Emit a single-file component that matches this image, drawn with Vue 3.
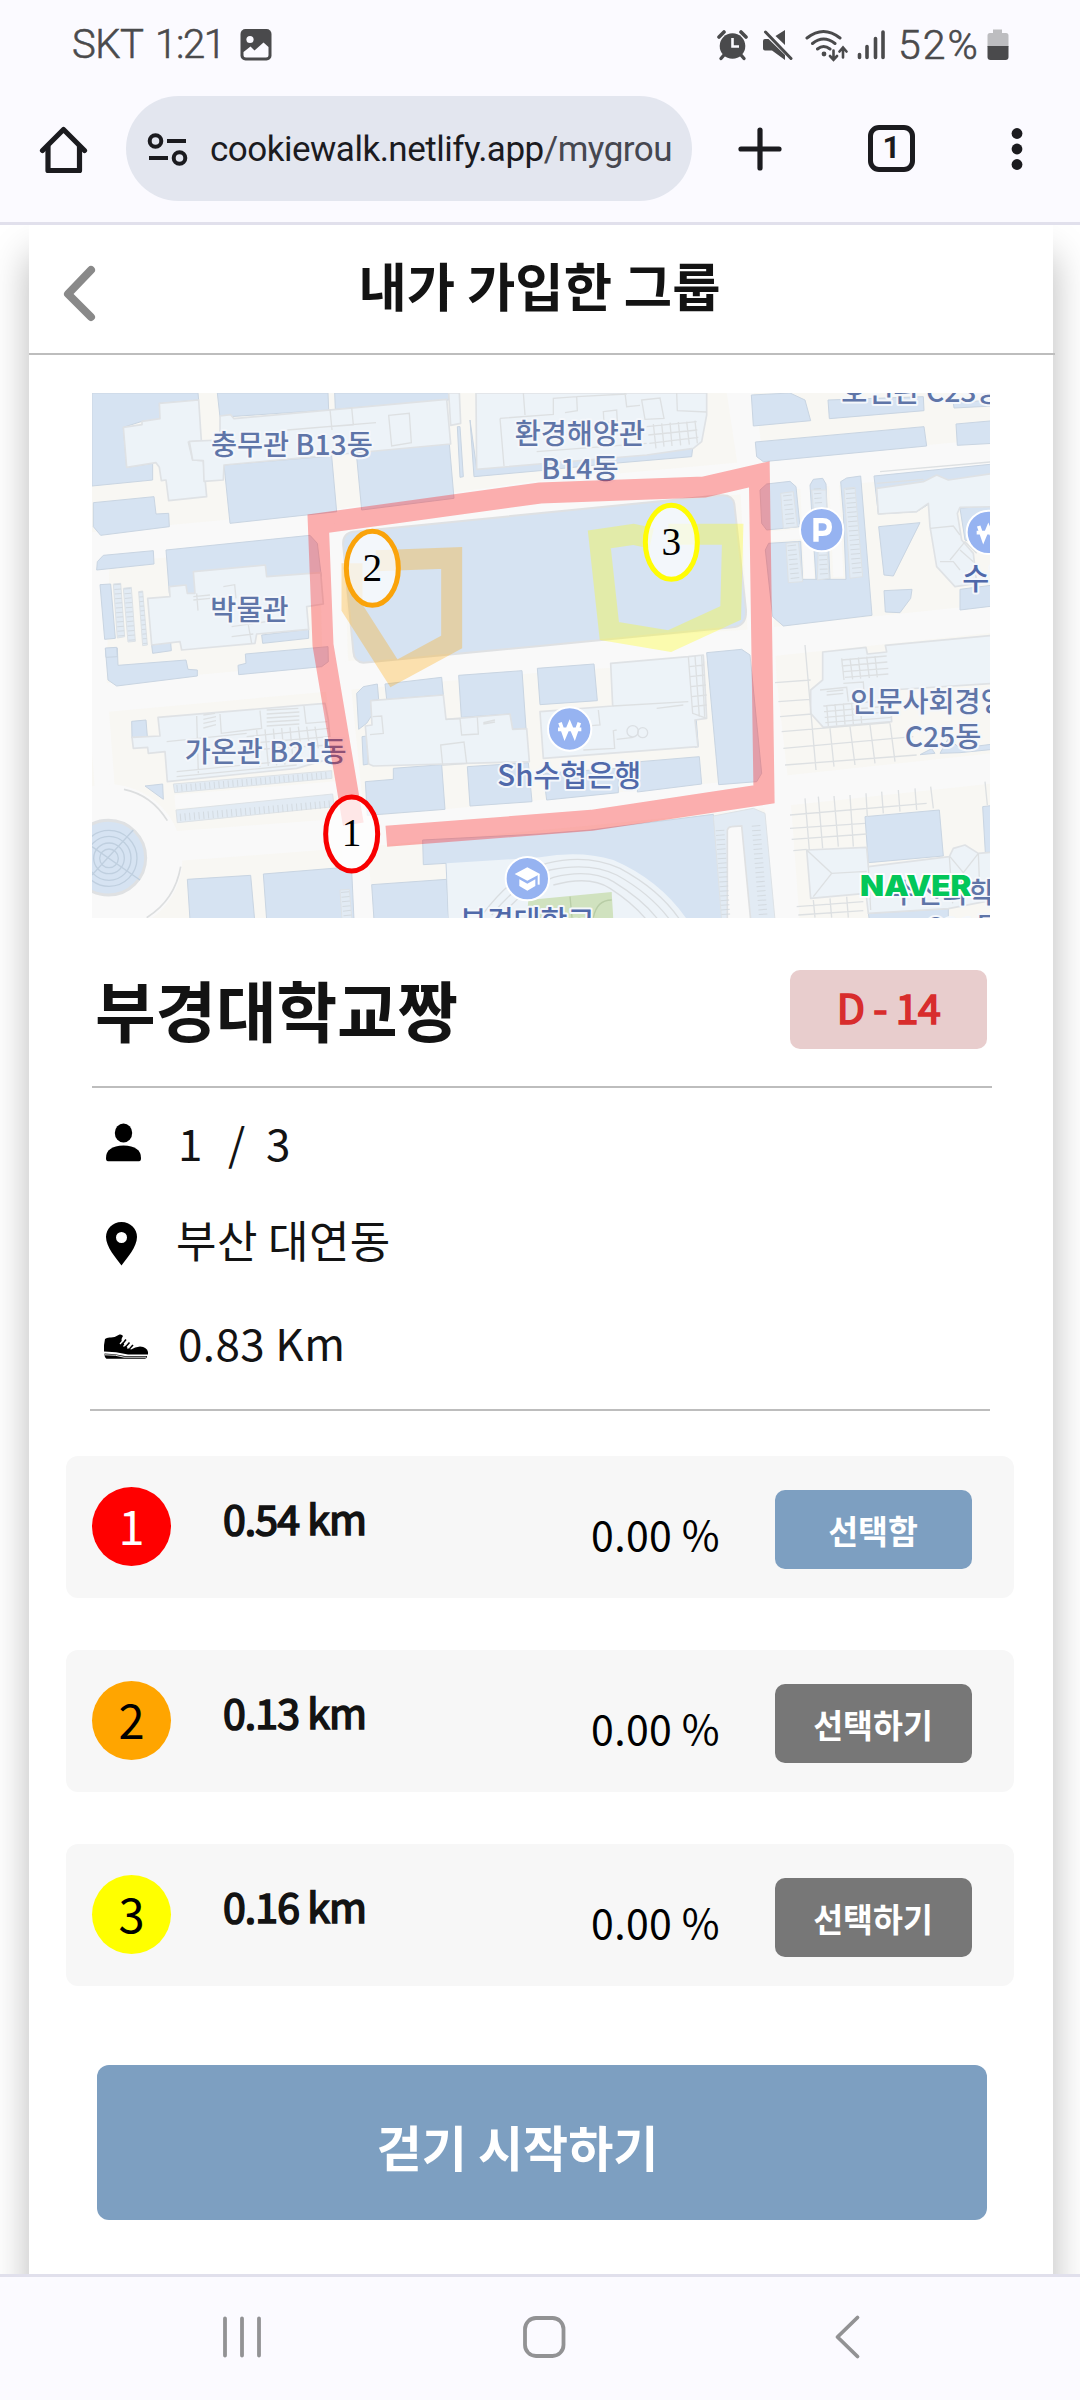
<script setup>
const fields = [
  '36,39 354,39 356,60 238,70 240,118 186,124 130,142 140,262 218,250 218,300 36,318',
  '412,39 744,39 746,90 420,112',
  '764,39 1106,39 1106,60 766,88',
  '432,255 755,228 770,395 450,430',
  '828,210 1108,192 1122,355 845,390',
  '40,368 222,350 228,402 266,400 268,440 62,466 40,440',
  '50,570 52,545 70,526 220,512 222,552',
  '258,510 690,466 712,490 724,590 560,600 345,650 268,640',
  '60,614 92,612 106,775 74,778',
  '1132,140 1140,140 1150,290 1140,292',
  '1170,120 1190,265 1380,250 1838,205 1835,230 1600,250 1380,272 1182,290',
  '545,765 686,748 686,775 548,790',
  '215,795 272,787 274,812 218,820',
  '76,806 112,804 114,856 318,840 324,868 352,870 352,888 110,918 84,900',
  '76,804 110,802 112,830 78,832',
  '496,822 744,800 745,845 725,860 476,884 474,856 498,850',
  '155,1024 198,1020 202,1070 156,1074',
  '195,1218 248,1212 250,1258',
  '322,1498 512,1486 524,1620 330,1620',
  '550,1482 770,1464 815,1470 822,1620 560,1620',
  '875,1514 1100,1498 1106,1620 882,1620',
  '1028,1380 1380,1362 1532,1350 1900,1303 1930,1620 1106,1620 1098,1450 1030,1454',
  '830,940 850,920 892,912 896,958 872,962 876,1005 860,1030 836,1048',
  '915,912 1085,892 1090,945 920,958',
  '1136,886 1326,872 1338,1045 1295,1048 1290,1002 1144,1012',
  '846,1070 860,1068 865,1152 850,1155',
  '940,1165 1085,1154 1095,1288 862,1306 856,1205 940,1198',
  '1162,1160 1345,1148 1356,1265 1170,1278',
  '1372,865 1542,852 1552,962 1380,974',
  '1880,818 1985,808 2010,825 2045,1180 2030,1205 1916,1214',
  '1390,1180 1615,1165 1615,1238 1400,1260',
  '1680,1145 1858,1130 1865,1212 1672,1236',
  '1838,1010 1848,1010 1855,1100 1845,1102',
  '2014,45 2130,39 2175,60 2192,122 2020,138',
  '2244,60 2530,50 2532,92 2248,116',
  '2026,186 2532,140 2540,198 2050,245 2030,230',
  '2628,132 2740,122 2740,190 2632,196',
  '2620,68 2740,60 2740,78 2622,84',
  '2040,330 2060,312 2130,304 2148,320 2160,440 2060,450 2045,430',
  '2190,315 2200,298 2228,295 2238,312 2250,598 2208,600',
  '2282,305 2300,294 2342,288 2376,706 2110,738 2078,710 2056,510 2066,490 2162,484 2168,598 2298,598 2290,400',
  '2396,440 2520,428 2440,588 2412,585',
  '2412,632 2496,628 2492,655 2460,698 2416,696',
  '2382,288 2740,252 2740,390 2550,370 2510,395 2395,402',
  '2640,385 2740,375 2740,510 2655,480',
  '2640,628 2740,615 2740,678 2640,690',
  '2355,1310 2578,1290 2590,1428 2365,1448',
  '2708,1280 2740,1276 2740,1416 2716,1418',
  '2365,1600 2605,1586 2605,1620 2368,1620',
  '2520,1124 2555,1106 2565,1120',
  '2580,1120 2605,1075 2640,1105 2740,1092 2740,1108 2640,1118'
]

const buildings = [
  '238,70 356,60 364,182 325,186 338,240 370,242 380,350 266,362 258,300 244,302 238,262 228,248 140,262 130,142 186,134 186,124 240,116',
  '420,108 452,104 462,116 1100,58 1112,192 432,255 430,300 372,304 370,242 338,240 328,184 420,180',
  '1106,39 1138,39 1142,130 1112,136',
  '1188,39 1880,39 1880,105 1865,185 1840,205 1700,225 1190,268',
  '340,575 556,555 560,590 722,578 730,672 680,680 686,748 530,762 525,790 305,810 300,785 215,795 203,655 270,650 268,620 318,615 322,640 345,640',
  '234,1012 735,970 745,1020 755,1135 650,1165 262,1205 255,1115 205,1120 203,1102 160,1105 156,1072 240,1068',
  '872,962 1090,945 1098,1018 1290,1002 1298,1048 1340,1046 1348,1145 880,1158 866,1152 856,1038 876,1035',
  '1592,850 1825,830 1870,825 1880,1015 1845,1020 1854,1100 1390,1135 1380,995 1598,978',
  '2228,816 2358,802 2362,822 2420,816 2416,796 2740,766 2740,910 2430,930 2435,1025 2230,1042 2192,1000 2192,930 2228,900',
  '2180,1410 2360,1402 2365,1460 2608,1430 2620,1405 2655,1395 2695,1420 2740,1416 2740,1560 2605,1586 2365,1600 2358,1540 2192,1555',
  '2390,325 2530,305 2570,285 2605,300 2740,280 2740,380 2640,382 2632,400 2645,480 2680,520 2690,610 2625,620 2570,560 2550,440 2545,370 2510,395 2395,402'
]

const lots = [
  '280,1212 755,1172 756,1195 284,1238',
  '288,1290 758,1242 762,1280 292,1328',
  '1900,1308 2020,1285 2055,1300 2085,1620 1925,1620',
  '100,612 122,610 134,770 112,774',
  '130,625 154,622 166,784 144,786',
  '176,635 188,633 202,795 188,797',
  '2102,340 2140,335 2152,440 2110,445',
  '2195,330 2238,330 2240,382 2200,385',
  '2292,325 2325,322 2348,590 2310,595',
  '2118,490 2155,486 2168,605 2125,608',
  '2215,500 2240,498 2248,595 2212,600',
  '780,1530 808,1528 816,1620 786,1620'
]

const details = [
  'M750,88 L756,150 M815,82 L820,135 L750,140 M622,150 L888,128 M926,106 L988,100 L994,188 L935,198 Z',
  'M1330,39 L1335,105 M1260,115 L1420,103 L1420,55 L1490,50 L1492,92 L1455,98 M1260,115 L1272,258 M1490,50 L1640,42 M1685,60 L1740,54 L1752,115 L1695,118 Z M1570,95 L1610,90 L1612,125 L1572,128 Z M1635,39 L1640,80 L1680,76 M1790,39 L1792,92 L1880,96',
  'M1700,140 L1850,125 M1705,165 L1852,150 M1708,190 L1855,172 M1720,132 L1728,205 M1745,130 L1752,200 M1770,128 L1776,198 M1795,126 L1802,196 M1820,125 L1828,194 M1845,122 L1852,190 M1370,215 L1700,190',
  'M340,650 L390,645 M340,660 L390,655 M350,640 L354,692 M430,620 L464,614 L468,655 M455,740 L560,725 M455,770 L520,762 M505,735 L515,790',
  'M350,1008 L355,1180 M420,1002 L424,1060 L545,1045 L540,992 M370,1005 L405,1000 M370,1018 L408,1010 M370,1030 L408,1022 M370,1044 L408,1034 M560,990 L655,985 M560,1002 L658,996 M560,1014 L658,1008 M560,1026 L658,1020 M560,1038 L658,1032 M672,978 L678,1030 L742,1025 M260,1085 L500,1060 M500,1070 L745,1045 M505,1090 L748,1070 M505,1110 L750,1095 M290,1190 L650,1155 M290,1175 L650,1140',
  'M530,1050 L540,1160 M555,1048 L565,1158 M580,1046 L590,1156 M605,1044 L615,1154 M630,1042 L640,1152 M655,1040 L665,1120 M680,1040 L690,1110 M705,1040 L715,1105',
  'M878,1010 L905,1008 L910,1060 L870,1064 M1098,1018 L1140,1016 L1145,1065 L1195,1062 L1192,1012 M1082,1095 L1152,1086 L1160,1150 L1088,1156 Z M1210,1028 L1245,1020 M1210,1032 L1245,1026',
  'M1598,978 L1825,965 M1825,830 L1838,1000 L1880,1015 M1845,828 L1858,1010 M1865,828 L1874,1010 M1828,860 L1872,855 M1830,890 L1875,885 M1832,920 L1878,915 M1835,950 L1880,945 M1838,980 L1880,975 M1555,990 L1560,1035 L1500,1040 M1610,1050 L1600,1052 L1604,1105 L1510,1110 M1610,1078 L1660,1072 M1730,985 L1810,975',
  'M2085,908 L2192,900 M2095,965 L2190,958 M2100,1010 L2195,1002 M2105,1055 L2430,1028 M2110,1105 L2500,1070 M2115,1155 L2510,1125 M2175,795 L2208,1170 M2250,1045 L2262,1160 M2310,1040 L2325,1155 M2370,1035 L2385,1150 M2430,1030 L2445,1145',
  'M2285,840 L2420,828 M2285,858 L2422,846 M2290,875 L2425,865 M2295,892 L2425,882 M2285,835 L2292,900 M2310,835 L2318,898 M2335,832 L2342,896 M2360,830 L2368,894 M2385,828 L2392,892 M2230,978 L2430,960 M2232,995 L2432,978 M2234,1012 L2434,995 M2236,1028 L2436,1012 M2240,975 L2245,1038 M2265,972 L2270,1036 M2290,970 L2295,1034 M2315,968 L2320,1032 M2340,966 L2345,1030 M2220,930 L2300,922 L2305,965 M2240,935 L2290,930 M2240,945 L2290,940 M2290,910 L2350,906 L2352,940',
  'M2130,1305 L2540,1270 M2130,1345 L2355,1330 M2135,1378 L2360,1362 M2140,1412 L2180,1408 M2175,1255 L2188,1410 M2215,1250 L2228,1405 M2262,1248 L2275,1400 M2310,1245 L2320,1400 M2358,1240 L2362,1310 M2405,1235 L2410,1300 M2455,1230 L2460,1295 M2505,1225 L2510,1290 M2552,1220 L2560,1285 M2715,1205 L2722,1275',
  'M2180,1410 L2255,1480 L2360,1474 M2255,1480 L2200,1550 M2365,1460 L2372,1590 M2608,1430 L2618,1570 M2610,1430 L2650,1478 L2695,1420 M2695,1420 L2700,1550 M2150,1580 L2350,1565 M2155,1605 L2350,1592 M2200,1560 L2205,1613 M2250,1555 L2255,1613 M2300,1550 L2305,1613',
  'M2550,445 L2620,438 L2640,465 M2610,540 L2655,485 L2690,520 M2640,510 L2680,545 M2580,545 L2620,545 L2640,570 M2390,310 L2530,298 M2400,275 L2740,245'
]

const ticks = [
  { x1: 290, y1: 1225, x2: 750, y2: 1185, w: 20 },
  { x1: 300, y1: 1312, x2: 755, y2: 1272, w: 22 },
  { x1: 1920, y1: 1350, x2: 1938, y2: 1613, w: 26 },
  { x1: 2028, y1: 1336, x2: 2050, y2: 1613, w: 26 },
  { x1: 112, y1: 612, x2: 124, y2: 772, w: 20 },
  { x1: 142, y1: 625, x2: 156, y2: 785, w: 20 },
  { x1: 182, y1: 635, x2: 196, y2: 795, w: 12 },
  { x1: 2122, y1: 345, x2: 2132, y2: 440, w: 26 },
  { x1: 2212, y1: 325, x2: 2216, y2: 380, w: 22 },
  { x1: 2310, y1: 325, x2: 2332, y2: 590, w: 28 },
  { x1: 2135, y1: 495, x2: 2146, y2: 605, w: 26 },
  { x1: 2228, y1: 510, x2: 2232, y2: 590, w: 24 },
  { x1: 795, y1: 1535, x2: 803, y2: 1613, w: 24 }
]

const labels = [
  { t: '충무관 B13동', x: 393, y: 225 },
  { t: '환경해양관', x: 1304, y: 193 },
  { t: 'B14동', x: 1384, y: 298 },
  { t: '호연관 C23동', x: 2284, y: 67 },
  { t: '박물관', x: 391, y: 721 },
  { t: '가온관 B21동', x: 314, y: 1147 },
  { t: '인문사회경영관', x: 2311, y: 996 },
  { t: 'C25동', x: 2474, y: 1101 },
  { t: '수산과학관', x: 2432, y: 1569 },
  { t: 'C21동', x: 2534, y: 1675 }
]
const places = [
  { t: 'Sh수협은행', x: 1252, y: 1219 },
  { t: '수협은행', x: 2647, y: 628 },
  { t: '부경대학교', x: 1139, y: 1656 }
]

const pins = [
  { n: 1, x: 815, y: 1362, c: '#f80000' },
  { n: 2, x: 877, y: 565, c: '#faa30a' },
  { n: 3, x: 1774, y: 487, c: '#fffc05' }
]

const routes = [
  { id: 1, km: '0.54 km', pct: '0.00 %', label: '선택함', color: 'red' },
  { id: 2, km: '0.13 km', pct: '0.00 %', label: '선택하기', color: 'orange' },
  { id: 3, km: '0.16 km', pct: '0.00 %', label: '선택하기', color: 'yellow' }
]
</script>

<template>
  <div class="screen">
    <header class="chrome">
      <div class="status">
        <span class="carrier">SKT</span><span class="clock">1:21</span>
        <svg class="pic" width="32" height="32" viewBox="0 0 32 32">
          <rect x="0.5" y="0" width="31" height="31.500" rx="5" fill="#4a4a4c" />
          <circle cx="10" cy="10.500" r="3.600" fill="#fbfaff" />
          <path d="M3.500,23 L10.500,17.500 L14.500,21.500 L23.500,13.500 L28.500,18 V26 Q28.500,28.500 26,28.500 H6 Q3.500,28.500 3.500,26 Z" fill="#fbfaff" />
        </svg>
        <span class="grow"></span>
        <svg width="31" height="32" viewBox="716 29 31 32" fill="none" stroke="#4a4a4c">
          <circle cx="731.500" cy="46" r="12.800" fill="#4a4a4c" stroke="none" />
          <path d="M718,37 L723,32 M745,37 L740,32" stroke-width="3.600" stroke-linecap="round" />
          <path d="M723,55 L720,58.500 M740,55 L743,58.500" stroke-width="3.400" stroke-linecap="round" />
          <path d="M731.500,38 V46.500 H738" stroke="#fbfaff" stroke-width="2.600" />
        </svg>
        <svg class="mute" width="31" height="32" viewBox="761 29 31 32">
          <path d="M784,30 V45 L774.500,36 Z M762,41 Q762,39 764,39 H767.500 L784,55 V60 L771,50.500 H764 Q762,50.500 762,48.500 Z" fill="#4a4a4c" />
          <path d="M764.500,32 L790,58.500" stroke="#4a4a4c" stroke-width="3" stroke-linecap="round" />
        </svg>
        <svg class="wifi" width="43" height="33" viewBox="804 28 43 33" fill="none" stroke="#4a4a4c" stroke-width="3" stroke-linecap="round">
          <path d="M806,37 Q822.500,24 839,37 M811.500,42.500 Q822.500,33.500 834,42.500 M816.500,48 Q822.500,43 829,48" />
          <circle cx="823" cy="53" r="2.400" fill="#4a4a4c" stroke="none" />
          <path d="M832.500,49.500 V58 M829,55 L832.500,58.800 L836,55 M842,56.500 V47.500 M838.500,50.500 L842,46.500 L845.500,50.500" stroke-width="2.600" />
        </svg>
        <svg class="signal" width="30" height="32" viewBox="856 29 30 32" stroke="#4a4a4c" stroke-width="3.600" stroke-linecap="round">
          <path d="M858.500,54.500 V57.500 M866,46.500 V57.500 M874.500,38.500 V57.500 M882,32 V57.500" />
        </svg>
        <span class="pct">52%</span>
        <svg class="battery" width="22" height="32" viewBox="0 0 22 32">
          <path d="M6,0.500 H15 V4 H19 Q21.500,4 21.500,6.500 V18 H0.500 V6.500 Q0.500,4 3,4 H6 Z" fill="#bdbdc0" />
          <path d="M0.500,17 H21.500 V28 Q21.500,31 18.500,31 H3.500 Q0.500,31 0.500,28 Z" fill="#4a4a4c" />
        </svg>
      </div>
      <div class="toolbar">
        <svg class="home" width="50" height="50" viewBox="38 123 50 50" fill="none" stroke="#1b1b1f" stroke-width="5.200" stroke-linejoin="round">
          <path d="M42.500,149.500 L63.500,128.500 L84.500,149.500" stroke-linecap="round" />
          <path d="M48,145 V169.500 H79.500 V145" />
        </svg>
        <div class="omnibox">
          <svg width="42" height="36" viewBox="147 130 42 36" fill="none" stroke="#1b1b1f" stroke-width="4">
            <circle cx="155.500" cy="140" r="5.800" /><circle cx="179.500" cy="157" r="5.800" />
            <path d="M167,140 H186 M149,157 H168" />
          </svg>
          <span class="url">cookiewalk.netlify.app<em>/mygrou</em></span>
        </div>
        <svg class="plus" width="44" height="44" viewBox="0 0 44 44"><path d="M22,3 V41 M3,22 H41" stroke="#1b1b1f" stroke-width="5.200" stroke-linecap="round" /></svg>
        <div class="tab">1</div>
        <svg class="more" width="14" height="48" viewBox="0 0 14 48" fill="#1b1b1f"><circle cx="7" cy="8.500" r="5.400" /><circle cx="7" cy="24" r="5.400" /><circle cx="7" cy="39.500" r="5.400" /></svg>
      </div>
    </header>

    <main class="viewport">
      <section class="panel">
        <div class="head">
          <svg class="back" width="36" height="60" viewBox="0 0 36 60"><path d="M31,7 L8,31 L31,54" fill="none" stroke="#898989" stroke-width="8" stroke-linecap="round" stroke-linejoin="round" /></svg>
          <h1>내가 가입한 그룹</h1>
        </div>

        <svg class="map" width="898" height="525" viewBox="36 39 2694 1575">
          <rect x="36" y="39" width="2694" height="1575" fill="#f8f7f3" />
          <g fill="none" stroke="#f9f9f9" stroke-width="84" stroke-linejoin="round">
            <path d="M0,508 L740,440 L1380,350 L1980,295 L2740,225" stroke-width="96" />
            <path d="M755,430 L765,820 L845,1620" stroke-width="76" />
            <path d="M1975,0 L2020,300 L2050,900 L2095,1300 L2120,1640" stroke-width="80" />
            <path d="M0,960 L760,890 L1380,835 L2030,790 L2740,715" stroke-width="86" />
            <path d="M0,1420 L860,1355 L1540,1290 L2040,1240 L2740,1165" stroke-width="90" />
            <path d="M60,480 L50,900 L80,1300" stroke-width="60" />
            <path d="M285,1265 L770,1225" stroke-width="42" />
            <path d="M2050,470 L2165,462 M2175,300 L2188,600 M2262,300 L2275,590" stroke-width="30" />
          </g>
          <circle cx="85" cy="1435" r="222" fill="#f9f9f9" />
          <path d="M132,1228 Q215,1245 262,1322 M302,1460 Q285,1560 200,1613" fill="none" stroke="#dcdedf" stroke-width="5" />
          <g fill="#d6e3f2" stroke="#c9d5e2" stroke-width="3" stroke-linejoin="round"><polygon v-for="(p, i) in fields" :key="i" :points="p" /></g>
          <path d="M790,500 Q785,460 820,455 L1920,346 Q1958,342 1963,372 L1998,690 Q2000,735 1965,741 L1380,798 L850,848 Q822,845 820,815 Z" fill="#d6e3f2" stroke="#dfe1e3" stroke-width="6" />
          <g fill="#edf3f8" stroke="#dfe2e5" stroke-width="5" stroke-linejoin="round"><polygon v-for="(p, i) in buildings" :key="i" :points="p" /></g>
          <g fill="#e2ebf4" stroke="#dde2e6" stroke-width="3"><polygon v-for="(p, i) in lots" :key="i" :points="p" /></g>
          <path d="M1942,1620 L1942,1350 Q1945,1340 1955,1340 L1985,1338 L2012,1620 Z" fill="#f9f9f9" stroke="#dfe1e3" stroke-width="5" />
          <line v-for="(k, i) in ticks" :key="i" :x1="k.x1" :y1="k.y1" :x2="k.x2" :y2="k.y2" :stroke-width="k.w" stroke="#d3dae0" stroke-dasharray="3 11" />
          <path v-for="(d, i) in details" :key="i" :d="d" fill="none" stroke="#dde0e2" stroke-width="4" />
          <g fill="none" stroke="#dbdfe3" stroke-width="4"><circle cx="1658" cy="1054" r="17" /><circle cx="1688" cy="1058" r="15" /></g>
          <!-- plaza -->
          <circle cx="85" cy="1433" r="112" fill="#d6e3f2" stroke="#dfe1e3" stroke-width="9" />
          <g fill="none" stroke="#bfcfdf" stroke-width="4"><circle cx="87" cy="1435" r="28" /><circle cx="87" cy="1435" r="46" /><circle cx="87" cy="1435" r="66" /><circle cx="87" cy="1435" r="84" /><path d="M36,1400 L180,1500 M36,1485 L160,1350" /></g>
          <!-- stadium -->
          <path d="M1100,1450 L1380,1432 Q1500,1410 1600,1440 Q1740,1500 1822,1620 L1106,1620 Z" fill="#edf3f8" />
          <g fill="none" stroke="#d9dde0" stroke-width="4"><path d="M1210,1600 Q1300,1480 1400,1450 Q1520,1420 1620,1465 Q1740,1530 1800,1620 M1235,1605 Q1320,1500 1410,1470 Q1530,1445 1610,1485 Q1710,1540 1770,1620 M1270,1600 Q1340,1520 1420,1492 Q1530,1465 1600,1505 Q1690,1560 1735,1620 M1420,1515 Q1530,1485 1590,1525 Q1660,1570 1700,1620" /></g>
          <path d="M1340,1620 L1345,1560 L1595,1536 L1600,1620 Z" fill="#d0e2bf" />
          <path d="M1470,1550 L1476,1613 M1540,1613 Q1550,1560 1595,1560" fill="none" stroke="#b8cda6" stroke-width="4" />

          <g class="labels" font-size="85"><text v-for="l in labels" :key="l.t" :x="l.x" :y="l.y">{{ l.t }}</text></g>
          <g class="labels place" font-size="88"><text v-for="l in places" :key="l.t" :x="l.x" :y="l.y">{{ l.t }}</text></g>

          <g fill="#96b3f1" stroke="#ffffff" stroke-width="6"><circle cx="2225" cy="449" r="65" /><circle cx="2725" cy="457" r="65" /><circle cx="1469" cy="1047" r="65" /><circle cx="1342" cy="1496" r="65" /></g>
          <path d="M2208,485 V422 H2228 Q2248,422 2248,441 Q2248,460 2228,460 H2208" fill="none" stroke="#ffffff" stroke-width="16" />
          <g fill="none" stroke="#ffffff" stroke-width="11">
            <path d="M1440,1028 L1454,1068 L1469,1032 L1484,1068 L1498,1028 M1434,1048 H1504" />
            <path d="M2696,438 L2710,478 L2725,442 L2740,478 M2690,458 H2760" />
          </g>
          <path d="M1304,1482 L1342,1462 L1380,1482 L1342,1502 Z M1318,1498 L1342,1511 L1366,1498 V1518 L1342,1532 L1318,1518 Z" fill="#ffffff" />
          <path d="M1376,1482 V1514" stroke="#ffffff" stroke-width="6" />
          <text class="naver" x="2340" y="1549" textLength="334" lengthAdjust="spacingAndGlyphs">NAVER</text>

          <g fill="none" stroke-opacity="0.3" stroke-width="63" stroke-miterlimit="10">
            <path d="M820,1333 L729,795 L715,431 L1380,339 L1873,321 L2038,283 L2052,1243 L1535,1321 L919,1369" stroke="#ff0000" />
            <path d="M888,542 L1115,534 L1115,786 L942,880 L816,683 L816,550" stroke="#ffa500" />
            <path d="M1765,463 L1958,463 L1952,699 L1769,783 L1588,753 L1558,478 L1660,463 L1715,475" stroke="#ffff00" />
          </g>
          <g v-for="p in pins" :key="p.n">
            <ellipse :cx="p.x" :cy="p.y" rx="78" ry="111" fill="#ffffff" fill-opacity="0.7" :stroke="p.c" stroke-width="15" />
            <text class="num" :x="p.x" :y="p.y + 37">{{ p.n }}</text>
          </g>
        </svg>

        <div class="group">
          <h2>부경대학교짱</h2>
          <span class="dday">D - 14</span>
        </div>
        <hr class="rule first">
        <ul class="info">
          <li>
            <svg width="48" height="50" viewBox="0 0 48 50"><ellipse cx="21.500" cy="16" rx="8.700" ry="9.400" /><path d="M4,41 Q4,29 21.500,28.500 Q39,29 39,41 Q39,44.300 37,44.300 H6 Q4,44.300 4,41 Z" /></svg>
            <span class="count"><i>1</i><i>/</i><i>3</i></span>
          </li>
          <li>
            <svg width="48" height="50" viewBox="0 0 48 50"><path fill-rule="evenodd" d="M19.500,5 C10.500,5 4,12 4,20 C4,30 14,41 19.500,48.500 C25,41 35,30 35,20 C35,12 28.500,5 19.500,5 Z M19.500,15 A5.500,5.500 0 1 1 19.500,26 A5.500,5.500 0 1 1 19.500,15 Z" /></svg>
            <span class="place-name">부산 대연동</span>
          </li>
          <li>
            <svg width="48" height="50" viewBox="0 0 48 50">
              <path d="M3,22 Q5,20 9,20.500 Q14,20 17.500,17.500 Q20,17 21,19 Q18,23 21,26 Q24,30.500 29,32.500 Q33,30 38,29.500 Q45,30 46,35 V37.500 H26 Q14,34.500 2,34.500 Q1.500,28 3,22 Z" />
              <path d="M2.500,36.500 Q13,36.500 23,39 H45 Q45,41.500 43,41.700 H4.500 Q2.500,41 2.500,36.500 Z" />
              <path d="M3,37.800 Q14,37.500 22,40.200 H44" fill="none" stroke="#fff" stroke-width="0.900" />
              <path d="M20,27.500 L24,22.500 M23.500,30 L27.500,25.500 M27.500,31.800 L31,28" fill="none" stroke="#000" stroke-width="1.600" />
              <path d="M18,27 L21.500,23 M21.500,29.500 L25,25.500 M25.500,31.500 L28.500,28" fill="none" stroke="#fff" stroke-width="1.300" />
            </svg>
            <span class="total">0.83 Km</span>
          </li>
        </ul>
        <hr class="rule">

        <div class="routes">
          <article v-for="r in routes" :key="r.id" class="route">
            <b class="dot" :class="r.color">{{ r.id }}</b>
            <strong class="km">{{ r.km }}</strong>
            <span class="rate">{{ r.pct }}</span>
            <button class="pick" :class="{ on: r.id === 1 }">{{ r.label }}</button>
          </article>
        </div>

        <button class="start">걷기 시작하기</button>
      </section>
    </main>

    <nav class="sysnav">
      <svg width="1080" height="123" viewBox="0 2277 1080 123" fill="none" stroke="#929294" stroke-width="3.800" stroke-linecap="round" stroke-linejoin="round">
        <path d="M225,2318.500 V2355.500 M242,2318.500 V2355.500 M259,2318.500 V2355.500" />
        <rect x="525" y="2318" width="38.500" height="38" rx="11" />
        <path d="M857.500,2317.500 L837.500,2337 L857.500,2356.500" />
      </svg>
    </nav>
  </div>
</template>

<style>
body { margin: 0; background: #fff; }
</style>

<style scoped>
* { box-sizing: border-box; }
.screen {
  width: 1080px; height: 2400px; display: flex; flex-direction: column; overflow: hidden;
  font-family: "Noto Sans CJK KR", "Noto Sans", sans-serif; color: #131313; background: #fff;
}
h1, h2, ul { margin: 0; padding: 0; }
svg { display: block; flex: none; }
button { border: 0; padding: 0; font: inherit; color: #fff; font-weight: 700; }

.chrome { height: 225px; background: #fbfaff; border-bottom: 3px solid #e1e0ec; }
.status {
  height: 90px; padding: 0 71px 0 72px; display: flex; align-items: center;
  font-family: Roboto, sans-serif; font-size: 40px; color: #4a4a4c; font-weight: 300; -webkit-text-stroke: 0.6px #4a4a4c;
}
.status svg { -webkit-text-stroke: 0; }
.status span { line-height: 90px; white-space: nowrap; }
.carrier { width: 83px; letter-spacing: -0.500px; }
.clock { width: 85px; letter-spacing: -1.300px; }
.grow { flex: 1; }
.mute { margin-left: 14px; }
.wifi { margin-left: 12px; }
.signal { margin-left: 9px; }
.pct { width: 88px; margin-left: 11px; font-size: 41px; letter-spacing: 2px; }
.battery { margin-left: 1px; }
.toolbar { display: flex; align-items: center; padding: 6px 55px 0 38px; height: 111px; }
.omnibox {
  width: 566px; height: 105px; margin-left: 38px; padding-left: 21px; border-radius: 53px;
  background: #e3e6ef; display: flex; align-items: center; font-family: Roboto, sans-serif;
}
.url { margin-left: 21px; padding-top: 2px; font-size: 35px; letter-spacing: -0.5px; color: #1b1b1f; white-space: nowrap; }
.url em { font-style: normal; color: #46474f; }
.plus { margin-left: 46px; }
.tab {
  width: 47px; height: 47px; margin-left: 86px; border: 5px solid #1b1b1f; border-radius: 11px;
  font: 700 31px/36px Roboto, sans-serif; text-align: center; color: #1b1b1f;
}
.more { margin-left: 95px; }

.viewport { height: 2049px; padding: 0 27px 0 29px; overflow: hidden; background: #fff; }
.panel { height: 2100px; background: #fff; box-shadow: 0 30px 36px rgba(0, 0, 0, 0.28); }
.head { height: 130px; margin-right: -2px; border-bottom: 2px solid #bdbdbd; display: flex; padding-left: 31px; }
.back { margin-top: 38px; }
h1 { width: 887px; text-align: center; font-size: 52.500px; font-weight: 700; line-height: 119px; }

.map { margin: 38px 0 0 63px; }
.labels { fill: #5f75a8; stroke: #f4f7fb; stroke-width: 12px; paint-order: stroke; stroke-linejoin: round; font-weight: 500; }
.place { fill: #5069aa; }
.naver { font: 900 86px Inter, sans-serif; fill: #03c75a; stroke: #fff; stroke-width: 10px; paint-order: stroke; }
.num { font: 118px "Liberation Serif", serif; text-anchor: middle; fill: #000; }

.group { display: flex; justify-content: space-between; height: 168px; margin: 0 61px 0 63px; padding: 52px 5px 0 4px; }
h2 { font-size: 66px; font-weight: 700; line-height: 77px; letter-spacing: -0.200px; margin-left: -1px; }
.dday {
  width: 197px; height: 79px; border-radius: 10px; background: #e8cdcd; color: #d82d2d;
  font-size: 41px; font-weight: 400; -webkit-text-stroke: 1.700px #d82d2d; line-height: 73px; text-align: center; letter-spacing: -0.500px;
}
.rule { height: 2px; margin: 0 63px 0 61px; border: 0; background: #bdbdbd; }
.first { margin: 0 61px 0 63px; }
.info { list-style: none; margin: 0 63px 0 62px; height: 321px; padding-top: 4px; font-size: 44px; }
.info li { height: 100px; display: flex; align-items: center; padding-left: 11px; }
.info li span { margin-left: 28px; line-height: 64px; }
.info li .place-name { padding-bottom: 6px; margin-left: 26px; letter-spacing: 0.400px; }
.info li .total { letter-spacing: 0.400px; }
.count { display: flex; }
.count i { font-style: normal; width: 47px; }
.count i:nth-child(2) { width: 38px; margin-left: 3px; }

.routes { margin: 45px 39px 0 37px; display: flex; flex-direction: column; gap: 52px; }
.route { height: 142px; border-radius: 12px; background: #f7f7f7; display: flex; padding-left: 26px; }
.dot { width: 79px; height: 79px; margin-top: 31px; border-radius: 50%; text-align: center; font-weight: 400; font-size: 47px; line-height: 76px; color: #000; }
.red { background: #ff0000; color: #fff; }
.orange { background: #ffa500; }
.yellow { background: #ffff00; }
.km { width: 368px; margin-left: 52px; font-size: 41px; line-height: 122px; font-weight: 400; -webkit-text-stroke: 1.700px #131313; letter-spacing: -0.900px; }
.rate { width: 184px; font-size: 41px; line-height: 154px; color: #000; letter-spacing: 0.400px; }
.pick { width: 197px; height: 79px; margin-top: 34px; border-radius: 10px; background: #777; font-size: 32.500px; line-height: 79px; padding-right: 1px; }
.on { background: #7d9fc1; }
.start {
  display: block; width: 890px; height: 155px; margin: 79px 0 0 68px; padding: 5px 49px 0 0;
  border-radius: 12px; background: #7d9fc1; font-size: 49px;
}
.sysnav { height: 126px; background: #fbfaff; border-top: 3px solid #e1e0ec; }
</style>
